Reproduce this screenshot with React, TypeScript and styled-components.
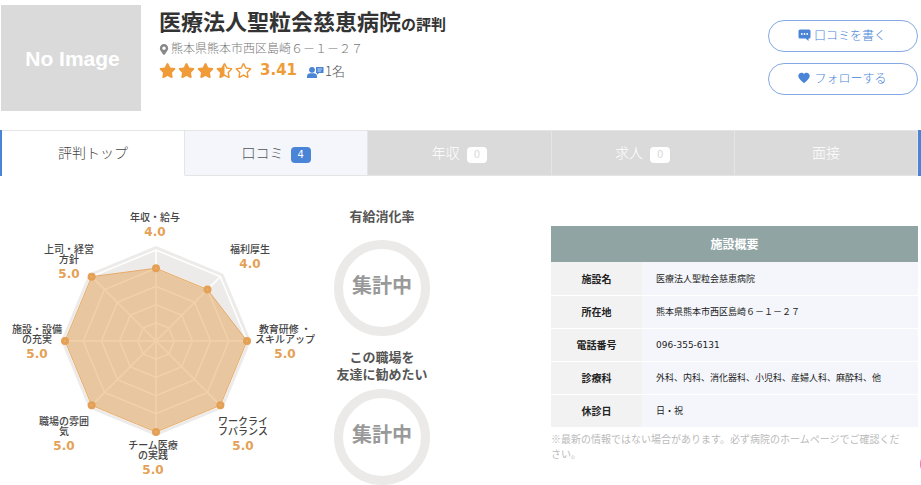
import React from "react";
import styled, { createGlobalStyle, css } from "styled-components";
import { FaStar, FaStarHalfAlt, FaRegStar, FaMapMarkerAlt } from "react-icons/fa";
import { IoMdHeart } from "react-icons/io";

const jp = `"Noto Sans CJK JP", sans-serif`;
const latin = `"DejaVu Sans", "Noto Sans CJK JP", sans-serif`;

const GlobalStyle = createGlobalStyle`
  *, *::before, *::after { box-sizing: border-box; }
  body { margin: 0; background: #fff; color: #333; font-family: ${jp}; overflow-x: hidden; }
  h1, h2, p { margin: 0; }
  svg { display: block; }
`;

const Header = styled.header`
  display: flex;
  align-items: flex-start;
  padding: 5px 3px 0 1px;
  height: 130px;
`;

const NoImage = styled.div`
  display: flex;
  align-items: center;
  justify-content: center;
  flex: none;
  width: 140px;
  height: 106px;
  padding: 2px 0 0 3px;
  background: #dadada;
  color: #fff;
  font: bold 21px "Liberation Sans", sans-serif;
`;

const Summary = styled.div`
  flex: 1;
  min-width: 0;
  padding-left: 18px;
`;

const Title = styled.h1`
  font-size: 22px;
  line-height: 30px;
  font-weight: 700;
  white-space: nowrap;

  small { font-size: 15px; font-weight: 700; }
`;

const Address = styled.p`
  display: flex;
  align-items: center;
  gap: 2px;
  font-size: 12px;
  line-height: 18px;
  font-weight: 300;
  color: #777;

  svg { width: 10px; height: 11px; margin-top: 2px; color: #888; }
`;

const Rating = styled.div`
  display: flex;
  align-items: center;
  margin-top: 3px;
  height: 20px;
`;

const Stars = styled.span`
  display: flex;
  gap: 2px;
  color: #f19a38;

  svg { width: 17px; height: 15px; }
`;

const Score = styled.strong`
  margin: 0 10px 0 8px;
  font: bold 15px ${latin};
  color: #f19a38;
`;

const Reviewers = styled.span`
  display: flex;
  align-items: center;
  gap: 1px;
  font-size: 13px;
  font-weight: 300;
  color: #555;

  svg { margin-top: 3px; }
`;

const Actions = styled.div`
  display: grid;
  gap: 11px;
  width: 150px;
  padding-top: 15px;
`;

const PillButton = styled.button`
  display: flex;
  align-items: center;
  justify-content: center;
  gap: 3px;
  height: 32px;
  padding: 0 2px 3px 0;
  border: 1px solid #84a9e2;
  border-radius: 16px;
  background: #fff;
  color: #4a84d6;
  font: 300 12px ${jp};
  cursor: pointer;
`;

const Tabs = styled.nav`
  display: grid;
  grid-template-columns: repeat(5, minmax(0, 1fr));
  height: 46px;
  border-left: 2px solid #4a84d6;
  border-right: 3px solid #4a84d6;
`;

type TabState = "active" | "open" | "disabled";

const tabStates = {
  active: css`border-bottom-color: #fff; background: #fff; color: #444;`,
  open: css`background: #f4f6fb; color: #555;`,
  disabled: css`background: #dadada; color: #fff;`,
};

const Tab = styled.a<{ $state: TabState }>`
  display: flex;
  align-items: center;
  justify-content: center;
  gap: 7px;
  padding-bottom: 2px;
  border: 1px solid #e5e5e5;
  border-left-width: 0;
  font-size: 14px;
  font-weight: 300;
  text-decoration: none;
  ${({ $state }) => tabStates[$state]}
`;

const Badge = styled.span<{ $muted: boolean }>`
  margin-top: 6px;
  padding: 0 7px;
  border-radius: 4px;
  background: ${({ $muted }) => ($muted ? "#fff" : "#4a84d6")};
  color: ${({ $muted }) => ($muted ? "#dadada" : "#fff")};
  font: 10px/16px ${latin};
`;

const Main = styled.main`
  display: grid;
  grid-template-columns: 320px 124px minmax(0, 1fr);
  padding: 28px 3px 0 0;
`;

const Chart = styled.section`
  position: relative;
  height: 280px;
`;

const RadarSvg = styled.svg`
  position: absolute;
  left: 56px;
  top: 37px;
`;

const AxisLabel = styled.div<{ $x: number; $y: number }>`
  position: absolute;
  left: ${({ $x }) => $x}px;
  top: ${({ $y }) => $y}px;
  transform: translateX(-50%);
  text-align: center;
  white-space: pre;
  font-size: 10px;
  line-height: 10px;
  font-weight: 500;
  color: #444;

  strong {
    display: block;
    margin-top: 3px;
    font: bold 12px/14px ${latin};
    color: #e4a156;
  }
`;

const Gauges = styled.section`
  display: flex;
  flex-direction: column;
  align-items: center;
`;

const GaugeTitle = styled.h2<{ $lines: number }>`
  margin-top: ${({ $lines }) => ($lines > 1 ? 12 : 3)}px;
  margin-bottom: ${({ $lines }) => ($lines > 1 ? 7 : 16)}px;
  font-size: 13px;
  line-height: 17px;
  font-weight: 700;
  text-align: center;
  white-space: pre;
  color: #555;
`;

const Ring = styled.div`
  display: flex;
  align-items: center;
  justify-content: center;
  width: 96px;
  height: 96px;
  padding-bottom: 8px;
  border: 9px solid #ebeae9;
  border-radius: 50%;
  font-size: 20px;
  font-weight: 700;
  white-space: nowrap;
  color: #999;
`;

const Overview = styled.section`
  margin: 22px 0 0 107px;
`;

const Facts = styled.table`
  width: 100%;
  border-collapse: collapse;

  caption {
    background: #91a4a4;
    color: #fff;
    font-size: 12px;
    font-weight: 700;
    line-height: 36px;
  }

  th, td {
    height: 33px;
    padding: 0;
    border-bottom: 1px solid #fff;
  }

  th {
    width: 91px;
    background: #f2f2f2;
    color: #222;
    font-size: 10px;
    font-weight: 700;
  }

  td {
    padding-left: 14px;
    background: #f4f6fb;
    color: #222;
    font: 9px ${latin};
  }
`;

const Note = styled.p`
  padding: 3px 14px 0 0;
  font-size: 10px;
  line-height: 15px;
  color: #bbb;
`;

const FloatingButton = styled.button`
  position: fixed;
  right: -25px;
  top: 451px;
  width: 26px;
  height: 26px;
  padding: 0;
  border: 0;
  border-radius: 50%;
  background: #f277b0;
`;

const CommentIcon = () => (
  <svg width="13" height="12" viewBox="0 0 12 12" aria-hidden="true">
    <path d="M1.5 0.500h9A1.500 1.500 0 0 1 12 2V8a1.500 1.500 0 0 1-1.500 1.500H10V12L7.200 9.500H1.500A1.500 1.500 0 0 1 0 8V2A1.500 1.500 0 0 1 1.500 0.500z" fill="#4a84d6" />
    <circle cx="3.300" cy="5" r="0.900" fill="#fff" />
    <circle cx="6" cy="5" r="0.900" fill="#fff" />
    <circle cx="8.700" cy="5" r="0.900" fill="#fff" />
  </svg>
);

const ReviewerIcon = () => (
  <svg width="17" height="12" viewBox="0 0 17 12" aria-hidden="true">
    <circle cx="5" cy="3.800" r="2.900" fill="#4a84d6" />
    <path d="M0 12v-1.500C0 8.500 1.500 7.300 3.300 7.300h3.400C8.500 7.300 10 8.500 10 10.500V12z" fill="#4a84d6" />
    <path d="M9 1h7.500v6H12l-2 1.800V7H9z" fill="#4a84d6" />
    <path d="M10.500 3h4.500M10.500 5h3.500" stroke="#fff" strokeWidth="0.700" />
  </svg>
);

const tabs: { label: string; count?: number; state: TabState }[] = [
  { label: "評判トップ", state: "active" },
  { label: "口コミ", count: 4, state: "open" },
  { label: "年収", count: 0, state: "disabled" },
  { label: "求人", count: 0, state: "disabled" },
  { label: "面接", state: "disabled" },
];

const axes = [
  { label: "年収・給与", value: 4, x: 155, y: 8 },
  { label: "福利厚生", value: 4, x: 250, y: 40 },
  { label: "教育研修 ・\nスキルアップ", value: 5, x: 285, y: 120 },
  { label: "ワークライ\nフバランス", value: 5, x: 243, y: 212 },
  { label: "チーム医療\nの実践", value: 5, x: 153, y: 236 },
  { label: "職場の雰囲\n気", value: 5, x: 64, y: 212 },
  { label: "施設・設備\nの充実", value: 5, x: 37, y: 120 },
  { label: "上司・経営\n方針", value: 5, x: 69, y: 40 },
];

const facts = [
  ["施設名", "医療法人聖粒会慈恵病院"],
  ["所在地", "熊本県熊本市西区島崎６－１－２７"],
  ["電話番号", "096-355-6131"],
  ["診療科", "外科、内科、消化器科、小児科、産婦人科、麻酔科、他"],
  ["休診日", "日・祝"],
];

const CENTER = 100;
const RADIUS = 91;

const vertex = (index: number, radius: number) => {
  const angle = (index * Math.PI) / 4;
  return [CENTER + radius * Math.sin(angle), CENTER - radius * Math.cos(angle)];
};

const octagon = (radius: number) =>
  axes.map((_, i) => vertex(i, radius).join(",")).join(" ");

const Radar = () => {
  const points = axes.map((axis, i) => vertex(i, (RADIUS * axis.value) / 5));
  return (
    <RadarSvg width="200" height="200" viewBox="0 0 200 200" role="img" aria-label="評価チャート">
      <polygon points={octagon(95)} fill="#edebea" />
      <g fill="none" stroke="#fff" strokeWidth="1.500">
        {[1, 2, 3, 4, 5].map((level) => (
          <polygon key={level} points={octagon((RADIUS * level) / 5)} />
        ))}
        {axes.map((axis, i) => {
          const [x, y] = vertex(i, RADIUS);
          return <line key={axis.label} x1={CENTER} y1={CENTER} x2={x} y2={y} />;
        })}
      </g>
      <polygon
        points={points.map((p) => p.join(",")).join(" ")}
        fill="rgba(228,161,86,0.5)"
        stroke="#e6ab68"
        strokeWidth="1"
      />
      {points.map(([x, y], i) => (
        <g key={axes[i].label}>
          <circle cx={x} cy={y} r="4" fill="#e4a156" />
          <circle cx={x} cy={y} r="1" fill="#e9b173" />
        </g>
      ))}
    </RadarSvg>
  );
};

export default function App() {
  return (
    <>
      <GlobalStyle />
      <Header>
        <NoImage>No Image</NoImage>
        <Summary>
          <Title>医療法人聖粒会慈恵病院<small>の評判</small></Title>
          <Address><FaMapMarkerAlt />熊本県熊本市西区島崎６－１－２７</Address>
          <Rating>
            <Stars>
              <FaStar /><FaStar /><FaStar /><FaStarHalfAlt /><FaRegStar />
            </Stars>
            <Score>3.41</Score>
            <Reviewers><ReviewerIcon />1名</Reviewers>
          </Rating>
        </Summary>
        <Actions>
          <PillButton type="button"><CommentIcon />口コミを書く</PillButton>
          <PillButton type="button"><IoMdHeart size={14} />フォローする</PillButton>
        </Actions>
      </Header>
      <Tabs>
        {tabs.map(({ label, count, state }) => (
          <Tab key={label} href="#" $state={state}>
            {label}
            {count !== undefined && <Badge $muted={count === 0}>{count}</Badge>}
          </Tab>
        ))}
      </Tabs>
      <Main>
        <Chart>
          <Radar />
          {axes.map(({ label, value, x, y }) => (
            <AxisLabel key={label} $x={x} $y={y}>
              {label}
              <strong>{value.toFixed(1)}</strong>
            </AxisLabel>
          ))}
        </Chart>
        <Gauges>
          <GaugeTitle $lines={1}>有給消化率</GaugeTitle>
          <Ring>集計中</Ring>
          <GaugeTitle $lines={2}>{"この職場を\n友達に勧めたい"}</GaugeTitle>
          <Ring>集計中</Ring>
        </Gauges>
        <Overview>
          <Facts>
            <caption>施設概要</caption>
            <tbody>
              {facts.map(([name, value]) => (
                <tr key={name}>
                  <th scope="row">{name}</th>
                  <td>{value}</td>
                </tr>
              ))}
            </tbody>
          </Facts>
          <Note>※最新の情報ではない場合があります。必ず病院のホームページでご確認ください。</Note>
        </Overview>
      </Main>
      <FloatingButton type="button" aria-label="メニュー" />
    </>
  );
}
